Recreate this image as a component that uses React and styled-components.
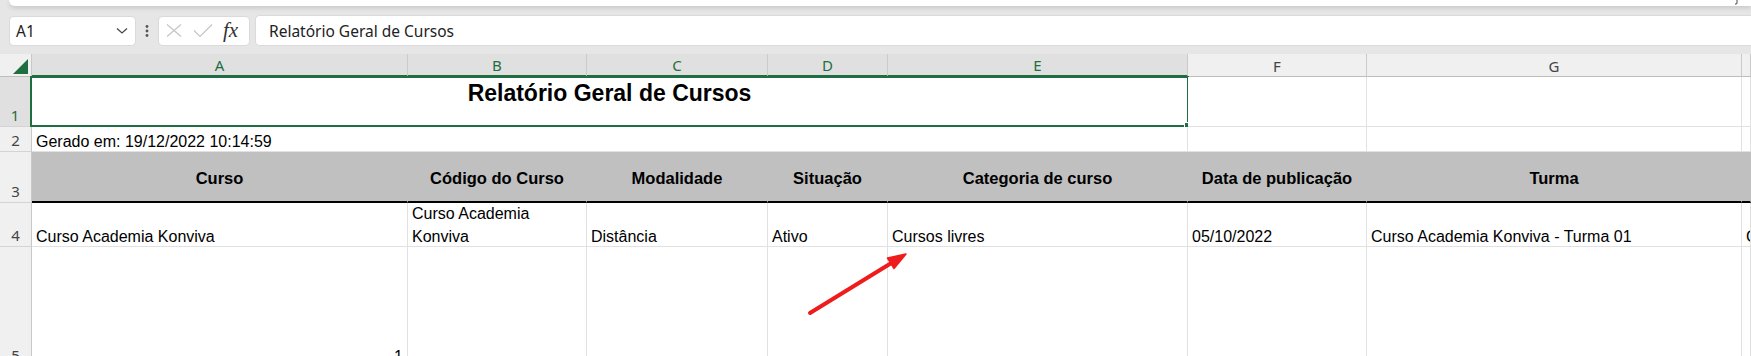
import React from 'react';
import styled, { createGlobalStyle } from 'styled-components';

const GlobalStyle = createGlobalStyle`
  html, body {
    margin: 0;
    padding: 0;
    background: #e6e6e6;
    overflow: hidden;
  }
`;

const Window = styled.div`
  position: relative;
  width: 1751px;
  height: 356px;
  overflow: hidden;
  background: #e6e6e6;
  font-family: 'Noto Sans', 'Liberation Sans', sans-serif;
`;

const RibbonEdge = styled.div`
  position: relative;
  height: 6px;
  margin-left: 9px;
  background: #ffffff;
  border-radius: 0 0 0 8px;
  box-shadow: 0 2px 5px rgba(0, 0, 0, 0.14);
`;

const CollapseMark = styled.svg`
  position: absolute;
  right: 12px;
  top: 0;
`;

const FormulaBar = styled.div`
  display: flex;
  align-items: center;
  height: 29px;
  margin: 10px 0 9px 0;
  padding-left: 10px;
`;

const NameBox = styled.div`
  display: flex;
  align-items: center;
  justify-content: space-between;
  width: 125px;
  height: 28px;
  box-sizing: border-box;
  padding: 0 7px 0 6px;
  background: #fff;
  border-radius: 4px;
  box-shadow: 0 0 0 1px rgba(0, 0, 0, 0.05);
  font-size: 15.5px;
  color: #222;
`;

const MoreDots = styled.svg`
  margin: 0 10px 0 10px;
`;

const FxGroup = styled.div`
  display: flex;
  align-items: center;
  width: 90px;
  height: 28px;
  box-sizing: border-box;
  padding-left: 7px;
  gap: 11px;
  background: #fff;
  border-radius: 4px;
  box-shadow: 0 0 0 1px rgba(0, 0, 0, 0.05);
`;

const FxLabel = styled.span`
  font-family: 'Liberation Serif', 'DejaVu Serif', serif;
  font-style: italic;
  font-size: 21px;
  color: #333;
  line-height: 1;
  margin-left: -1px;
`;

const FormulaInput = styled.div`
  flex: 1;
  display: flex;
  align-items: center;
  height: 29px;
  margin-left: 7px;
  padding-left: 13px;
  background: #fff;
  border-radius: 4px 0 0 4px;
  box-shadow: 0 0 0 1px rgba(0, 0, 0, 0.05);
  font-size: 15.5px;
  color: #222;
`;

const Sheet = styled.div`
  display: grid;
  grid-template-columns: 32px 376px 179px 181px 120px 300px 179px 375px 1fr;
  grid-template-rows: 23px 50px 25px 51px 44px 120px;
  background: #fff;
`;

const Corner = styled.div`
  position: relative;
  background: #f0f0f0;
  border-right: 1px solid #c8c8c8;
  border-bottom: 1px solid #bdbdbd;
`;

const CornerTriangle = styled.div`
  position: absolute;
  right: 3px;
  bottom: 2px;
  width: 0;
  height: 0;
  border-left: 15px solid transparent;
  border-bottom: 15px solid #1e6e42;
`;

const ColHead = styled.div`
  display: flex;
  align-items: center;
  justify-content: center;
  box-sizing: border-box;
  padding-top: 1px;
  background: ${p => (p.$selected ? '#e0e0e0' : '#f0f0f0')};
  color: ${p => (p.$selected ? '#1e6e42' : '#444')};
  border-right: 1px solid #cacaca;
  border-bottom: ${p => (p.$selected ? '2px solid #1e6e42' : '1px solid #bdbdbd')};
  font-size: 15px;
`;

const RowHead = styled.div`
  display: flex;
  align-items: flex-end;
  justify-content: center;
  box-sizing: border-box;
  background: ${p => (p.$selected ? '#e0e0e0' : '#f0f0f0')};
  color: ${p => (p.$selected ? '#1e6e42' : '#444')};
  border-right: ${p => (p.$selected ? '2px solid #1e6e42' : '1px solid #c8c8c8')};
  border-bottom: 1px solid #d4d4d4;
  font-size: 15px;
  line-height: 22px;
`;

const Cell = styled.div`
  position: relative;
  display: flex;
  box-sizing: border-box;
  min-width: 0;
  overflow: ${p => (p.$clip ? 'hidden' : 'visible')};
  grid-column: span ${p => p.$span || 1};
  align-items: ${p => p.$valign || 'flex-end'};
  justify-content: ${p => p.$align || 'flex-start'};
  padding: ${p => (p.$head ? '3px 4px 0 4px' : '0 4px')};
  background: ${p => (p.$head ? '#c0c0c0' : '#fff')};
  border-right: 1px solid ${p => (p.$head ? '#c0c0c0' : '#e1e1e1')};
  border-bottom: ${p => (p.$head ? '2px solid #000' : '1px solid #e1e1e1')};
  font-family: 'Liberation Sans', Arial, sans-serif;
  font-size: ${p => (p.$bold ? '16.5px' : '16px')};
  font-weight: ${p => (p.$bold ? 700 : 400)};
  line-height: 23px;
  color: #000;
  white-space: ${p => (p.$wrap ? 'normal' : 'nowrap')};
`;

const CellText = styled.span`
  position: relative;
  top: 2px;
`;

const Title = styled.span`
  padding-top: 2.5px;
  font-size: 23px;
  font-weight: 700;
  line-height: 26px;
`;

const Selection = styled.div`
  position: absolute;
  left: -2px;
  top: -1px;
  right: -2px;
  bottom: -1px;
  border: 2px solid #1e6e42;
  pointer-events: none;
`;

const FillHandle = styled.div`
  position: absolute;
  right: -5px;
  bottom: -5px;
  width: 6px;
  height: 6px;
  background: #1e6e42;
  border: 1px solid #fff;
`;

const Annotation = styled.svg`
  position: absolute;
  left: 0;
  top: 0;
  pointer-events: none;
`;

const columns = ['A', 'B', 'C', 'D', 'E', 'F', 'G'];
const headers = [
  'Curso',
  'Código do Curso',
  'Modalidade',
  'Situação',
  'Categoria de curso',
  'Data de publicação',
  'Turma',
];
const values = [
  'Curso Academia Konviva',
  'Curso Academia Konviva',
  'Distância',
  'Ativo',
  'Cursos livres',
  '05/10/2022',
  'Curso Academia Konviva - Turma 01',
];

const App = () => {
  return (
    <Window>
      <GlobalStyle />
      <RibbonEdge>
        <CollapseMark width="6" height="5" viewBox="0 0 6 5">
          <path d="M4 0 L4 3 Q4 4.5 2 4" fill="none" stroke="#444" strokeWidth="1" />
        </CollapseMark>
      </RibbonEdge>

      <FormulaBar>
        <NameBox>
          <span>A1</span>
          <svg width="12" height="8" viewBox="0 0 12 8">
            <path d="M1 1.5 L6 6 L11 1.5" fill="none" stroke="#444" strokeWidth="1.2" />
          </svg>
        </NameBox>
        <MoreDots width="4" height="12" viewBox="0 0 4 12">
          <circle cx="2" cy="1.5" r="1.4" fill="#555" />
          <circle cx="2" cy="6" r="1.4" fill="#555" />
          <circle cx="2" cy="10.5" r="1.4" fill="#555" />
        </MoreDots>
        <FxGroup>
          <svg width="16" height="13" viewBox="0 0 16 13">
            <path d="M1 0.5 L15 12.5 M15 0.5 L1 12.5" stroke="#c4c4c4" strokeWidth="1.1" fill="none" />
          </svg>
          <svg width="20" height="13" viewBox="0 0 20 13">
            <path d="M1 6.5 L7 12.5 L19 0.5" stroke="#c4c4c4" strokeWidth="1.1" fill="none" />
          </svg>
          <FxLabel>fx</FxLabel>
        </FxGroup>
        <FormulaInput>Relatório Geral de Cursos</FormulaInput>
      </FormulaBar>

      <Sheet>
        <Corner>
          <CornerTriangle />
        </Corner>
        {columns.map((c, i) => (
          <ColHead key={c} $selected={i < 5}>{c}</ColHead>
        ))}
        <ColHead />

        <RowHead $selected>1</RowHead>
        <Cell $span={5} $align="center" $valign="flex-start">
          <Title>Relatório Geral de Cursos</Title>
          <Selection>
            <FillHandle />
          </Selection>
        </Cell>
        <Cell />
        <Cell />
        <Cell />

        <RowHead>2</RowHead>
        <Cell $span={5}>
          <CellText>Gerado em: 19/12/2022 10:14:59</CellText>
        </Cell>
        <Cell />
        <Cell />
        <Cell />

        <RowHead>3</RowHead>
        {headers.map(h => (
          <Cell key={h} $head $bold $align="center" $valign="center">{h}</Cell>
        ))}
        <Cell $head />

        <RowHead>4</RowHead>
        {values.map((v, i) => (
          <Cell key={i} $wrap={i === 1}>
            <CellText>{v}</CellText>
          </Cell>
        ))}
        <Cell $clip>
          <CellText>Curso</CellText>
        </Cell>

        <RowHead>5</RowHead>
        <Cell $align="flex-end">
          <CellText>1</CellText>
        </Cell>
        {columns.slice(1).map(c => (
          <Cell key={c} />
        ))}
        <Cell />
      </Sheet>

      <Annotation width="1751" height="356" viewBox="0 0 1751 356">
        <line x1="810" y1="313" x2="893" y2="262" stroke="#ee1c1c" strokeWidth="4" strokeLinecap="round" />
        <polygon points="906,254 887.5,258 894,268.5" fill="#ee1c1c" stroke="#ee1c1c" strokeWidth="1.5" strokeLinejoin="round" />
      </Annotation>
    </Window>
  );
};

export default App;
